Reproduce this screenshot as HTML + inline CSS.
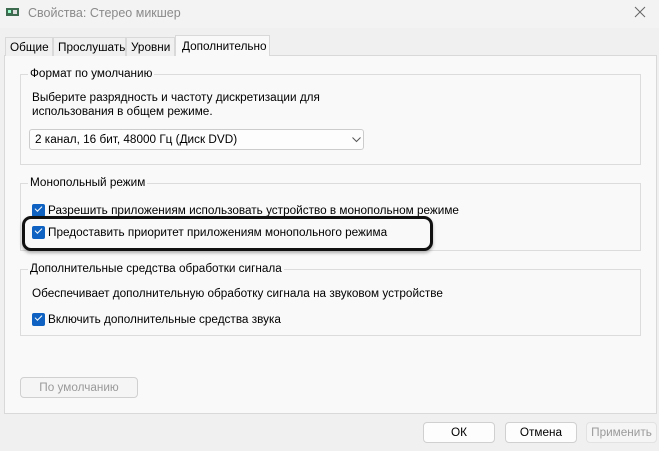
<!DOCTYPE html><html><head><meta charset="utf-8"><style>
*{box-sizing:border-box}body{margin:0;width:659px;height:451px;background:#f0f0f0;font:11.75px "Liberation Sans",sans-serif;color:#000;position:relative;overflow:hidden}
.a{position:absolute}
.title{left:0;top:0;width:659px;height:28px;background:#f3f3f3}
.tab{position:absolute;top:37px;height:19px;border:1px solid #d9d9d9;border-bottom:none;background:#f0f0f0;padding:3px 4px 0;white-space:nowrap}
.panel{left:4px;top:55px;width:653px;height:359px;background:#f9f9f9;border:1px solid #d9d9d9}
.grp{position:absolute;border:1px solid #dcdcdc}
.gl{position:absolute;top:-8px;left:7px;background:#f9f9f9;padding:0 2px}
.cb{position:absolute;width:13px;height:13px;background:#0f62c1;border-radius:2px}
.cb:after{content:"";position:absolute;left:3px;top:2px;width:6px;height:3px;border-left:1.5px solid #fff;border-bottom:1.5px solid #fff;transform:rotate(-45deg)}
.btn{position:absolute;height:21px;border:1px solid #d0d0d0;background:#fdfdfd;border-radius:4px;text-align:center;line-height:19px}
</style></head><body>
<div class="a title"></div>
<svg class="a" style="left:6px;top:7px" width="14" height="10"><rect x="0" y="1" width="13" height="8" fill="#3d6b4f"/><rect x="2" y="3" width="3" height="3" fill="#9fc"/><rect x="7" y="3" width="4" height="4" fill="#ddd"/></svg>
<div class="a" style="left:28px;top:6px;color:#8a8a8a;font-size:12.5px">Свойства: Стерео микшер</div>
<svg class="a" style="left:634px;top:6px" width="12" height="12"><path d="M1 1L11 11M11 1L1 11" stroke="#666" stroke-width="1"/></svg>
<div class="a panel"></div>
<div class="tab" style="left:5px;width:48px">Общие</div>
<div class="tab" style="left:53px;width:73px">Прослушать</div>
<div class="tab" style="left:126px;width:49px">Уровни</div>
<div class="tab" style="left:175px;top:35px;height:21px;width:95px;background:#f9f9f9;padding-top:4px;padding-left:6px">Дополнительно</div>
<div class="grp" style="left:20px;top:74px;width:621px;height:91px"><span class="gl">Формат по умолчанию</span></div>
<div class="a" style="left:32px;top:91px;line-height:14px">Выберите разрядность и частоту дискретизации для<br>использования в общем режиме.</div>
<div class="a" style="left:29px;top:129px;width:335px;height:21px;background:#fdfdfd;border:1px solid #ccc;border-radius:3px;padding:3px 5px">2 канал, 16 бит, 48000 Гц (Диск DVD)</div>
<svg class="a" style="left:352px;top:137px" width="9" height="6"><path d="M0.5 0.5L4.5 4.5L8.5 0.5" fill="none" stroke="#555"/></svg>
<div class="grp" style="left:20px;top:183px;width:621px;height:68px"><span class="gl">Монопольный режим</span></div>
<div class="cb" style="left:32px;top:204px"></div>
<div class="a" style="left:48px;top:204px">Разрешить приложениям использовать устройство в монопольном режиме</div>
<div class="a" style="left:22px;top:216px;width:411px;height:35px;border:3px solid #111;border-radius:9px;background:#f9f9f9;box-shadow:0 2px 3px rgba(0,0,0,.3)"></div>
<div class="cb" style="left:32px;top:226px"></div>
<div class="a" style="left:48px;top:226px">Предоставить приоритет приложениям монопольного режима</div>
<div class="grp" style="left:20px;top:269px;width:621px;height:67px"><span class="gl">Дополнительные средства обработки сигнала</span></div>
<div class="a" style="left:32px;top:287px">Обеспечивает дополнительную обработку сигнала на звуковом устройстве</div>
<div class="cb" style="left:32px;top:313px"></div>
<div class="a" style="left:48px;top:313px">Включить дополнительные средства звука</div>
<div class="btn" style="left:20px;top:377px;width:118px;color:#9a9a9a;background:#f5f5f5">По умолчанию</div>
<div class="btn" style="left:423px;top:422px;width:72px">ОК</div>
<div class="btn" style="left:505px;top:422px;width:72px">Отмена</div>
<div class="btn" style="left:586px;top:422px;width:71px;color:#9a9a9a;background:#f5f5f5;border-color:#e2e2e2">Применить</div>
</body></html>
